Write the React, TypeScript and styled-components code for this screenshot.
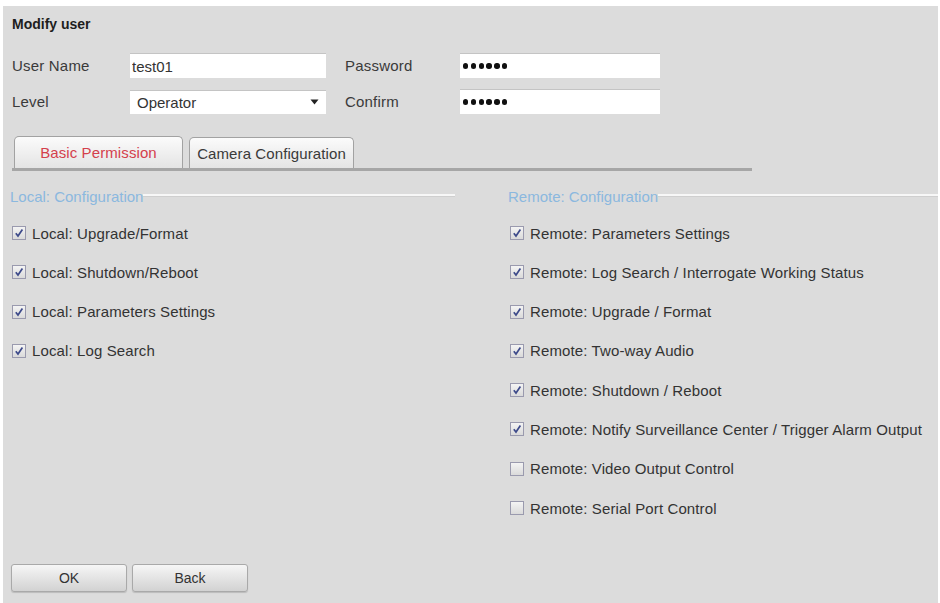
import React from 'react';
import styled, { createGlobalStyle } from 'styled-components';

const GlobalStyle = createGlobalStyle`
  html, body {
    margin: 0;
    padding: 0;
    background: #ffffff;
  }
  body {
    font-family: 'Liberation Sans', Arial, sans-serif;
  }
`;

const Panel = styled.div`
  margin: 6px 2px 0 3px;
  height: 597px;
  box-sizing: border-box;
  background: #dcdcdc;
  padding: 9px 0 0 9px;
  display: flex;
  flex-direction: column;
  overflow: hidden;
  color: #3a3a3a;
`;

const Title = styled.div`
  font-size: 14px;
  font-weight: bold;
  line-height: 18px;
  color: #1e1e1e;
`;

const Form = styled.div`
  margin-top: 20px;
  display: grid;
  grid-template-columns: 118px 196px 134px 200px;
  row-gap: 11px;
  align-items: center;
`;

const Label = styled.div<{ $gap?: number }>`
  font-size: 15px;
  line-height: 18px;
  letter-spacing: 0.2px;
  padding-left: ${p => p.$gap || 0}px;
`;

const TextInput = styled.input`
  box-sizing: border-box;
  width: 100%;
  height: 25px;
  border: none;
  border-top: 1px solid #c4c4c4;
  background: #ffffff;
  padding: 0 2px;
  font-family: 'Liberation Sans', Arial, sans-serif;
  font-size: 15px;
  color: #333;
  outline: none;
`;

const Dots = styled.div`
  box-sizing: border-box;
  height: 25px;
  background: #ffffff;
  border-top: 1px solid #c4c4c4;
  padding-left: 3px;
  display: flex;
  align-items: center;
  gap: 2.4px;
`;

const Dot = styled.span`
  width: 5.4px;
  height: 5.4px;
  border-radius: 50%;
  background: #111;
`;

const Select = styled.div`
  box-sizing: border-box;
  height: 24px;
  background: #ffffff;
  border-top: 1px solid #c4c4c4;
  padding: 0 7px 0 7px;
  display: flex;
  align-items: center;
  justify-content: space-between;
  font-size: 15px;
  color: #333;
`;

const TabStrip = styled.div`
  margin-top: 22px;
  width: 740px;
  display: flex;
  gap: 6px;
  padding-left: 2px;
  border-bottom: 3px solid #a6a6a6;
  box-sizing: border-box;
`;

const Tab = styled.div<{ $active?: boolean; $width: number }>`
  box-sizing: border-box;
  width: ${p => p.$width}px;
  height: ${p => (p.$active ? 32 : 31)}px;
  margin-top: ${p => (p.$active ? 0 : 1)}px;
  border: 1px solid #a2a2a2;
  border-bottom: none;
  border-radius: 5px 5px 0 0;
  background: linear-gradient(#fbfbfb, #e4e4e4);
  display: flex;
  align-items: center;
  justify-content: center;
  font-size: 15px;
  letter-spacing: 0.1px;
  color: ${p => (p.$active ? '#d4404c' : '#3a3a3a')};
`;

const Columns = styled.div`
  margin-top: 17px;
  margin-left: -2px;
  display: grid;
  grid-template-columns: 498px 1fr;
`;

const Section = styled.div<{ $lineEnd: number }>`
  padding-right: ${p => p.$lineEnd}px;
`;

const SectionHead = styled.div`
  display: flex;
  align-items: center;
  font-size: 15px;
  line-height: 18px;
  color: #8bb8df;
`;

const HeadLine = styled.div`
  flex: 1;
  height: 2px;
  margin-top: -4px;
  background: #f7f7f7;
  border-bottom: 1px solid #cfcfcf;
`;

const Items = styled.div`
  margin-top: 17px;
  display: flex;
  flex-direction: column;
  gap: 19.3px;
`;

const Item = styled.label`
  display: flex;
  align-items: center;
  gap: 6px;
  height: 20px;
  font-size: 15px;
  letter-spacing: 0.12px;
  color: #333;
  padding-left: 2px;
`;

const Box = styled.span`
  box-sizing: border-box;
  width: 14px;
  height: 14px;
  border: 1px solid #9a9aae;
  background: linear-gradient(#f4f4f4, #dadada);
  display: flex;
  align-items: center;
  justify-content: center;
`;

const ButtonBar = styled.div`
  margin-top: auto;
  margin-bottom: 11px;
  margin-left: -1px;
  display: flex;
  gap: 5px;
`;

const Button = styled.button`
  box-sizing: border-box;
  width: 116px;
  height: 28px;
  border: 1px solid #a9a9a9;
  border-radius: 3px;
  background: linear-gradient(#f6f6f6, #d2d2d2);
  font-family: 'Liberation Sans', Arial, sans-serif;
  font-size: 14px;
  color: #333;
  box-shadow: 0 1px 1px rgba(0, 0, 0, 0.15);
`;

const CheckItem = ({ label, checked }: { label: string; checked: boolean }) => (
  <Item>
    <Box>
      {checked && (
        <svg width="10" height="10" viewBox="0 0 10 10">
          <path d="M1.8 5.2 L4 8 L8.4 1.6" fill="none" stroke="#3d4a8a" strokeWidth="1.7" />
        </svg>
      )}
    </Box>
    {label}
  </Item>
);

const PasswordDots = () => (
  <Dots>
    {[0, 1, 2, 3, 4, 5].map(i => <Dot key={i} />)}
  </Dots>
);

const localItems = [
  'Local: Upgrade/Format',
  'Local: Shutdown/Reboot',
  'Local: Parameters Settings',
  'Local: Log Search',
];

const remoteItems: [string, boolean][] = [
  ['Remote: Parameters Settings', true],
  ['Remote: Log Search / Interrogate Working Status', true],
  ['Remote: Upgrade / Format', true],
  ['Remote: Two-way Audio', true],
  ['Remote: Shutdown / Reboot', true],
  ['Remote: Notify Surveillance Center / Trigger Alarm Output', true],
  ['Remote: Video Output Control', false],
  ['Remote: Serial Port Control', false],
];

const App = () => (
  <>
    <GlobalStyle />
    <Panel>
      <Title>Modify user</Title>
      <Form>
        <Label>User Name</Label>
        <TextInput defaultValue="test01" />
        <Label $gap={19}>Password</Label>
        <PasswordDots />
        <Label>Level</Label>
        <Select>
          Operator
          <svg width="9" height="6" viewBox="0 0 9 6">
            <path d="M0.5 0.5 H8.5 L4.5 5.5 Z" fill="#222" />
          </svg>
        </Select>
        <Label $gap={19}>Confirm</Label>
        <PasswordDots />
      </Form>
      <TabStrip>
        <Tab $active $width={169}>Basic Permission</Tab>
        <Tab $width={165}>Camera Configuration</Tab>
      </TabStrip>
      <Columns>
        <Section $lineEnd={53}>
          <SectionHead>
            Local: Configuration
            <HeadLine />
          </SectionHead>
          <Items>
            {localItems.map(l => <CheckItem key={l} label={l} checked />)}
          </Items>
        </Section>
        <Section $lineEnd={0}>
          <SectionHead>
            Remote: Configuration
            <HeadLine />
          </SectionHead>
          <Items>
            {remoteItems.map(([l, c]) => <CheckItem key={l} label={l} checked={c} />)}
          </Items>
        </Section>
      </Columns>
      <ButtonBar>
        <Button>OK</Button>
        <Button>Back</Button>
      </ButtonBar>
    </Panel>
  </>
);

export default App;
